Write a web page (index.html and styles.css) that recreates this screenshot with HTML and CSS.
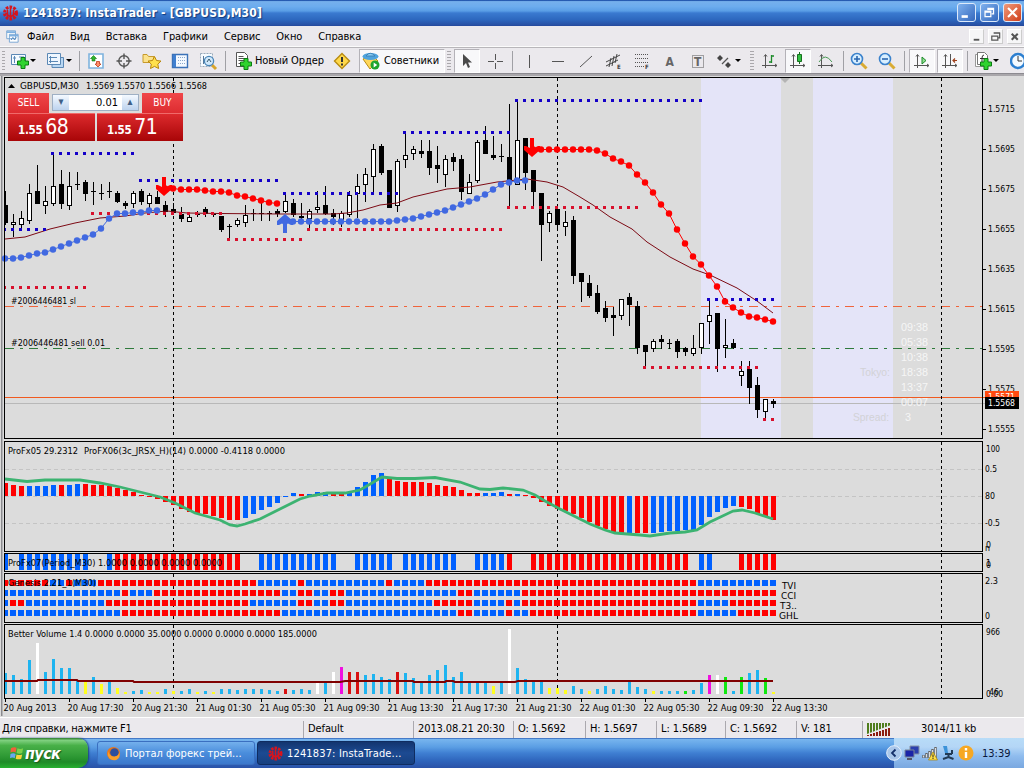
FILE: index.html
```html
<!DOCTYPE html>
<html lang="ru">
<head>
  <meta charset="UTF-8" />
  <title>1241837: InstaTrader - [GBPUSD,M30]</title>
  <link rel="stylesheet" href="styles.css">
</head>
<body>
  <svg width="0" height="0" class="defs">
    <symbol id="logo" viewBox="0 0 16 16">
      <circle cx="8" cy="8" r="6" fill="none" stroke="#d8141c" stroke-width="3" stroke-dasharray="2.6 1.2" />
      <path d="M8 2v13M5 5v7M11 5v7M3 8l5 4 5-4" fill="none" stroke="#d8141c" stroke-width="1.6" />
    </symbol>
    <symbol id="plus" viewBox="0 0 12 12">
      <path d="M4 .5h4V4h3.500v4H8v3.500H4V8H.5V4H4z" fill="#2fd32f" stroke="#0a7d12" />
    </symbol>
    <symbol id="axes" viewBox="0 0 20 20">
      <path d="M5.500 4v13M2 14.500h15M4 5.500l1.500-2 1.500 2M15 13l2 1.500-2 1.500" fill="none" stroke="#555" />
    </symbol>
  </svg>

  <div class="titlebar">
    <svg class="app-icon"><use href="#logo" /></svg>
    <span class="title">1241837: InstaTrader - [GBPUSD,M30]</span>
    <div class="win-btn"><svg viewBox="0 0 19 19"><path d="M4 14h7" stroke="#fff" stroke-width="3" /></svg></div>
    <div class="win-btn"><svg viewBox="0 0 19 19"><path d="M7 5h7v6h-2M7 6h7M4.500 8h6.500v6H4.500zM4 9h7" fill="none" stroke="#fff" stroke-width="1.400" /></svg></div>
    <div class="win-btn close"><svg viewBox="0 0 19 19"><path d="M4.500 4.500l10 10M14.500 4.500l-10 10" stroke="#fff" stroke-width="2.400" /></svg></div>
  </div>

  <div class="menubar">
    <svg class="menu-icon" viewBox="0 0 16 16"><path d="M2 1.500h10v9H2zM5 5.500h10v9H5z" fill="#fff" stroke="#6f9fcf" /><path d="M2 3h10M5 7h10" stroke="#7fb0e0" stroke-width="2" /><path d="M7 12l2-3 2 3 2-3" fill="none" stroke="#4a80b8" /></svg>
    <span>Файл</span><span>Вид</span><span>Вставка</span><span>Графики</span><span>Сервис</span><span>Окно</span><span>Справка</span>
    <div class="mdi">
      <svg viewBox="0 0 14 14"><path d="M4 10.500h6" stroke="#555" stroke-width="2" /></svg>
      <svg viewBox="0 0 14 14"><path d="M5 3.500h6.500v5H10M5 3h7M3 6.500h6.500v4.500H3zM3 6.500h7" fill="none" stroke="#555" stroke-width="1.300" /></svg>
      <svg viewBox="0 0 14 14"><path d="M4 4l6.500 6.500M10.500 4L4 10.500" stroke="#555" stroke-width="2.200" /></svg>
    </div>
  </div>

  <div class="toolbar">
    <i class="grip"></i>
    <div class="btn dd"><svg viewBox="0 0 20 20"><path d="M1.500 3.500h14v10h-14z" fill="#f4faff" stroke="#5b88b5" /><path d="M4.500 5v7M3 7h3M9 6h5" stroke="#5b88b5" /><use href="#plus" x="7" y="6" width="12" height="12" /></svg></div>
    <div class="btn dd"><svg viewBox="0 0 20 20"><path d="M6 6.500h11.500v10H6z" fill="#b9d7f3" stroke="#5b88b5" /><path d="M1.500 2.500h13v11h-13z" fill="#eef6ff" stroke="#5b88b5" /><path d="M4.500 5v7M3 10.500h9M3 6.500h8" stroke="#5b88b5" /></svg></div>
    <i class="sep narrow"></i>
    <div class="btn"><svg viewBox="0 0 20 20"><path d="M3 3h14v14H3z" fill="#fff" stroke="#7fb3de" stroke-width="1.600" /><path d="M7.500 4.500l3 3H9V10H6V7.500H4.500z" fill="#2fb52f" stroke="#117711" stroke-width=".6" /><path d="M12 16l-3-3h1.500v-2.500h3V13H15z" fill="#ff8f6a" stroke="#c03a1a" stroke-width=".8" /></svg></div>
    <div class="btn"><svg viewBox="0 0 20 20"><circle cx="10" cy="10" r="5.200" fill="none" stroke="#555" stroke-width="1.400" /><path d="M10 2.500V8M10 12v5.500M2.500 10H8M12 10h5.500" stroke="#555" stroke-width="1.400" /></svg></div>
    <div class="btn"><svg viewBox="0 0 20 20"><path d="M1 3.500h4l1.500 2H12v6H1z" fill="#fbe28c" stroke="#c79a2c" /><path d="M12.500 5.500l2 4 4.500.6-3.200 3 .8 4.400-4.100-2.100-4 2.100.8-4.400-3.300-3 4.500-.6z" fill="#ffe14d" stroke="#b8860b" /></svg></div>
    <div class="btn"><svg viewBox="0 0 20 20"><path d="M2.500 3.500h15v13h-15z" fill="#f4f9ff" stroke="#3b72b8" stroke-width="1.400" /><path d="M3 4h3v12H3z" fill="#3f7fd0" /><path d="M8 6.500h8M8 9.500h8M8 12.500h8" stroke="#8aa7cc" stroke-dasharray="1 1" /></svg></div>
    <div class="btn"><svg viewBox="0 0 20 20"><path d="M2.500 2.500h12v13h-12z" fill="#f6fbff" stroke="#9ab" stroke-dasharray="2 1" /><path d="M5.500 5v8" stroke="#579" /><path d="M14 14l4 4" stroke="#d8a52b" stroke-width="3" /><circle cx="11" cy="10" r="4.600" fill="#cfe8fb" stroke="#4a86b8" stroke-width="1.300" /><path d="M9 11l2-3 2 3" fill="none" stroke="#356" /></svg></div>
    <i class="sep"></i>
    <div class="btn wide order"><svg viewBox="0 0 20 20"><path d="M2.500 1.500h8l3 3v11h-11z" fill="#fff" stroke="#555" /><path d="M4.500 5.500h5M4.500 7.500h6M4.500 9.500h6M4.500 12.500h4" stroke="#555" /><use href="#plus" x="6" y="7" width="12" height="12" /></svg>Новый Ордер</div>
    <div class="btn"><svg viewBox="0 0 20 20"><path d="M10 2.500l7.500 7.500-7.500 7.500L2.500 10z" fill="#ffd84a" stroke="#b98c12" stroke-width="1.400" /><path d="M10 6v5M10 12.500v2" stroke="#333" stroke-width="2" /></svg></div>
    <div class="btn wide pressed experts"><svg viewBox="0 0 20 20"><path d="M2 8l7 10 8-8-3-3H4z" fill="#ffd75a" stroke="#b98c12" /><ellipse cx="9.500" cy="5.500" rx="8" ry="3.500" fill="#4fa3dd" /><path d="M5 5q4-5.500 9 0z" fill="#8fd0f5" stroke="#3b82b8" /><circle cx="14" cy="14" r="4.500" fill="#1fa52c" /><path d="M12.700 11.500v5l3.500-2.500z" fill="#fff" /></svg>Советники</div>
    <i class="grip"></i>
    <div class="btn pressed"><svg viewBox="0 0 20 20"><path d="M6 3v12l3-3 2 5 2-1-2-4.500h4z" fill="#4a4a4a" /></svg></div>
    <div class="btn"><svg viewBox="0 0 20 20"><path d="M10.500 3v6M10.500 12v6M3 10.500h6M12 10.500h6" stroke="#555" /></svg></div>
    <i class="sep"></i>
    <div class="btn"><svg viewBox="0 0 20 20"><path d="M9.500 4v13" stroke="#555" /></svg></div>
    <div class="btn"><svg viewBox="0 0 20 20"><path d="M4 10.500h12" stroke="#555" /></svg></div>
    <div class="btn"><svg viewBox="0 0 20 20"><path d="M4 16L16 5" stroke="#555" /></svg></div>
    <div class="btn"><svg viewBox="0 0 20 20"><path d="M2 11L16 4M2 15L14 9M5 16l2-9M8 15l2-10M11 12l2-9" stroke="#444" /><text x="13" y="18">E</text></svg></div>
    <div class="btn"><svg viewBox="0 0 20 20"><path d="M3 3.500h13M3 7.500h13M3 11.500h13M3 15.500h9" stroke="#555" stroke-dasharray="1 1" /><text x="13" y="18">F</text></svg></div>
    <div class="btn"><svg viewBox="0 0 20 20"><text class="letter" x="5.500" y="15">A</text></svg></div>
    <div class="btn"><svg viewBox="0 0 20 20"><path d="M4.500 4.500h11v12h-11z" fill="none" stroke="#555" stroke-dasharray="1 1" /><text class="letter" x="6" y="15">T</text></svg></div>
    <div class="btn dd"><svg viewBox="0 0 20 20"><path d="M5 4l3 3-3 3-3-3zM13 11l3 3-3 3-3-3z" fill="#444" /><path d="M7 13l6-6" stroke="#555" stroke-width="1.200" /></svg></div>
    <i class="grip"></i>
    <div class="btn"><svg viewBox="0 0 20 20"><use href="#axes" /><path d="M11.500 4v8M9 11h2.500M11.500 5H14" stroke="#1c8a2a" stroke-width="1.300" /></svg></div>
    <div class="btn pressed"><svg viewBox="0 0 20 20"><use href="#axes" /><path d="M11.500 1v12" stroke="#176f20" /><path d="M9.500 3.500h4v7h-4z" fill="#34c244" stroke="#176f20" /></svg></div>
    <div class="btn"><svg viewBox="0 0 20 20"><use href="#axes" /><path d="M3 11q6-10 13 0" fill="none" stroke="#4a9a55" /></svg></div>
    <i class="sep five"></i>
    <div class="btn"><svg viewBox="0 0 20 20"><path d="M12 12l5.500 5.500" stroke="#d9ab33" stroke-width="3" /><circle cx="8" cy="8" r="5.500" fill="#d8efff" stroke="#3b82cc" stroke-width="1.600" /><path d="M5 8h6M8 5v6" stroke="#2a66b0" stroke-width="1.600" /></svg></div>
    <div class="btn"><svg viewBox="0 0 20 20"><path d="M12 12l5.500 5.500" stroke="#d9ab33" stroke-width="3" /><circle cx="8" cy="8" r="5.500" fill="#d8efff" stroke="#3b82cc" stroke-width="1.600" /><path d="M5 8h6" stroke="#2a66b0" stroke-width="1.600" /></svg></div>
    <i class="sep"></i>
    <div class="btn pressed"><svg viewBox="0 0 20 20"><use href="#axes" /><path d="M10 6v7l4-3.500z" fill="#8fe08f" stroke="#1c8a2a" /></svg></div>
    <div class="btn pressed"><svg viewBox="0 0 20 20"><use href="#axes" /><path d="M10.500 3v11" stroke="#555" /><path d="M17 9.500h-4M15 7.500l-2 2 2 2" fill="none" stroke="#a0401a" stroke-width="1.200" /></svg></div>
    <i class="sep six"></i>
    <div class="btn dd"><svg viewBox="0 0 20 20"><path d="M2.500 3.500h9v12h-9z" fill="#fff" stroke="#999" /><path d="M4.500 1.500h7l3 3v9h-10z" fill="#fff" stroke="#777" /><path d="M11 4q-2 0-2 3v5M7 7.500h4" fill="none" stroke="#333" /><use href="#plus" x="7" y="7" width="12" height="12" /></svg></div>
    <div class="btn"><svg viewBox="0 0 20 20"><circle cx="8" cy="10" r="7" fill="#f4faff" stroke="#2c7fd0" stroke-width="2.400" /><path d="M8 5v5h4" fill="none" stroke="#333" /></svg></div>
  </div>

  <div class="chart-window">
    <svg id="chart" viewBox="0 74 1024 643" width="1024" height="643"></svg>
    <div class="one-click">
      <div class="side">SELL</div>
      <div class="lots"><b>&#9662;</b><span>0.01</span><b>&#9652;</b></div>
      <div class="side">BUY</div>
      <div class="price"><small>1.55</small>68</div>
      <div class="price buy"><small>1.55</small>71</div>
    </div>
  </div>

  <div class="statusbar">
    <div class="help">Для справки, нажмите F1</div>
    <div class="profile">Default</div>
    <div class="time">2013.08.21 20:30</div>
    <div class="open">O: 1.5692</div>
    <div class="high">H: 1.5697</div>
    <div class="low">L: 1.5689</div>
    <div class="closep">C: 1.5692</div>
    <div class="vol">V: 181</div>
    <div class="net"><svg width="24" height="13" viewBox="0 0 24 13"><path d="M0 6h24" stroke="#4f7d1e" stroke-width="12" stroke-dasharray="2 1" /><path d="M0 11l24-9v11H0z" fill="#ebe9ed" /><path d="M1 12v1M4 11V13M7 10V13M10 9V13M13 8V13M16 7V13M19 6V13M22 5v8" stroke="#8c1c10" stroke-width="2" /></svg><span>3014/11 kb</span></div>
  </div>

  <div class="taskbar">
    <div class="start">
      <svg viewBox="0 0 16 16"><path d="M1 3q3-2 6-.5L6 7.500Q3.500 6 .5 7.500z" fill="#f0603a" /><path d="M8 3q3 1.500 6 0l-1 5q-3 1.500-6 0z" fill="#7fd04a" /><path d="M.5 9q3-1.500 5.500 0l-1 4.500q-2.500-1.500-5 0z" fill="#6aa8f0" /><path d="M7 9.500q3 1.500 6 0L12 14q-3 1.500-6 0z" fill="#fbd23c" /></svg>
      <span>пуск</span>
    </div>
    <div class="task">
      <svg viewBox="0 0 16 16"><circle cx="8" cy="8" r="7" fill="#e8761c" /><circle cx="9" cy="7" r="4.600" fill="#2c4f9e" /><path d="M2 5q2 7 8 6 4-1 4-5 2 6-3 9-7 1-9-5z" fill="#f9a02c" /></svg>
      <span>Портал форекс трей...</span>
    </div>
    <div class="task active">
      <svg><use href="#logo" /></svg>
      <span>1241837: InstaTrade...</span>
    </div>
    <div class="tray">
      <svg class="chevron" viewBox="0 0 16 16"><circle cx="8" cy="8" r="7.300" fill="#a9c6ea" stroke="#e4eefb" /><path d="M9.500 4.500L6 8l3.500 3.500" fill="none" stroke="#15306a" stroke-width="1.800" /></svg>
      <svg viewBox="0 0 16 16"><path d="M6 1h9v8H6z" fill="#2b3fae" stroke="#8593a5" /><path d="M1 5h9v7H1z" fill="#1a24a8" stroke="#7b8797" /><path d="M3 14h5" stroke="#556" stroke-width="2" /></svg>
      <svg viewBox="0 0 16 16"><path d="M1.500 13v-3M4.500 13V8M7.500 13V6M10.500 13V4M13.500 13V2" stroke="#666" stroke-width="2.400" /><path d="M1.500 12.500v-2M4.500 12.500V9M7.500 12.500V7M10.500 12.500V5M13.500 12.500V3" stroke="#ddd" /><path d="M11 7l4.500 8h-9z" fill="#ffe14a" stroke="#a98300" stroke-width=".7" /><path d="M11 9.500v3M11 13v1" stroke="#222" /></svg>
      <svg viewBox="0 0 16 16"><path d="M3 1h4l1 7H5z" fill="#3c92d8" /><path d="M5 9h7M8.500 9v4M3 14l5.500-2 5 2M12 5v4" stroke="#223a55" stroke-width="2" fill="none" /></svg>
      <svg viewBox="0 0 16 16"><circle cx="8" cy="8" r="7.500" fill="#f7a823" /><path d="M8 3v2.500M8 7v6" stroke="#fff" stroke-width="2.400" /></svg>
      <span>13:39</span>
    </div>
  </div>

  <script src="chart.js"></script>
</body>
</html>
```
FILE: styles.css
```css
* {
  box-sizing: border-box;
}
body {
  margin: 0;
  width: 1024px;
  height: 768px;
  overflow: hidden;
  display: flex;
  flex-direction: column;
  background: #ebe9ed;
  color: #000;
  font-family: "DejaVu Sans Condensed", "DejaVu Sans", sans-serif;
  font-size: 11px;
  white-space: nowrap;
}
.defs {
  position: absolute;
}

/* title */
.titlebar {
  flex: none;
  height: 26px;
  display: flex;
  align-items: center;
  padding: 0 0 1px 2px;
  background: linear-gradient(#1f4fa5 0, #2a62b8 3%, #76b0ec 6%, #6cacee 25%, #5a9ee6 42%, #3a7ad0 50%, #2d68bf 75%, #2850a4 96%, #24479a);
}
.app-icon {
  width: 17px;
  height: 16px;
}
.title {
  flex: 1;
  margin-left: 4px;
  color: #fff;
  font-size: 12px;
  font-weight: bold;
  letter-spacing: 0.19px;
  text-shadow: 1px 1px 1px #123a7c;
}
.win-btn {
  width: 19px;
  height: 19px;
  margin-right: 4px;
  border: 1px solid #dce9fa;
  border-radius: 3px;
  background: linear-gradient(135deg, #7fb1ee, #3468bd);
}
.win-btn svg {
  display: block;
}
.win-btn.close {
  margin-right: 2px;
  background: linear-gradient(135deg, #f09a7a, #cf3e1a);
}

/* menu */
.menubar {
  flex: none;
  height: 21px;
  display: flex;
  align-items: center;
  padding-left: 5px;
  border-bottom: 1px solid #fbfbfb;
  letter-spacing: -0.1px;
}
.menu-icon {
  width: 14px;
  height: 15px;
  margin-right: 8px;
}
.menubar span {
  margin-right: 16px;
}
.mdi {
  display: flex;
  gap: 4px;
  margin-left: auto;
  margin-right: 2px;
}
.mdi svg {
  width: 15px;
  height: 15px;
  background: #f6f6f7;
  border: 1px solid #fff;
  border-right-color: #ccc;
  border-bottom-color: #ccc;
}

/* toolbar */
.toolbar {
  flex: none;
  height: 27px;
  display: flex;
  align-items: center;
  overflow: hidden;
  border-top: 1px solid #b8b6ba;
  border-bottom: 1px solid #8c8a90;
}
.toolbar > * {
  flex: none;
}
.grip {
  width: 8px;
  height: 20px;
  background: repeating-linear-gradient(#aaa8ac 0 1px, transparent 1px 3px) content-box;
  padding: 0 2px;
}
.toolbar > .grip:first-child {
  width: 7px;
}
.sep {
  width: 7px;
  height: 20px;
  background: linear-gradient(#a0a0a5, #a0a0a5) 3px 0 / 1px 100% no-repeat;
}
.sep.narrow {
  width: 3px;
  background-position-x: 0;
}
.sep.five {
  width: 5px;
}
.sep.six {
  width: 6px;
}
.btn {
  width: 28px;
  height: 24px;
  display: flex;
  align-items: center;
  justify-content: center;
}
.btn svg {
  width: 20px;
  height: 20px;
  flex: none;
}
.btn text {
  font-size: 6px;
  font-weight: bold;
  fill: #444;
}
.btn text.letter {
  font-size: 12px;
  fill: #666;
}
.dd {
  width: 36px;
  justify-content: flex-start;
  padding-left: 3px;
}
.dd::after {
  content: "";
  border: 3px solid transparent;
  border-top-color: #000;
  border-bottom: 0;
}
.wide {
  justify-content: flex-start;
}
.wide.order {
  width: 99px;
  padding-left: 5px;
  gap: 1px;
  letter-spacing: -0.1px;
}
.pressed {
  background: #f8f8fa;
  border: 1px solid #b4b2b8;
  border-right-color: #fff;
  border-bottom-color: #fff;
  margin: 0 1px;
  width: 26px;
}
.wide.experts {
  width: 86px;
  margin: 0 0 0 3px;
  padding-left: 1px;
  gap: 3px;
  letter-spacing: -0.1px;
}

/* chart */
.chart-window {
  position: relative;
  flex: none;
  height: 643px;
  background: #dcdcdc;
}
#chart {
  display: block;
}
#chart text {
  font-family: "DejaVu Sans Condensed", "DejaVu Sans", sans-serif;
  font-size: 9.5px;
}
#chart .session {
  font-family: "Liberation Sans", Arial, sans-serif;
  font-size: 11.5px;
}
.one-click {
  position: absolute;
  left: 8px;
  top: 19px;
  width: 175px;
  height: 48px;
  display: grid;
  grid-template-columns: 41px 93px 41px;
  grid-template-rows: 20px 28px;
}
.side {
  background: linear-gradient(#f0474a, #dd2c30);
  color: #fff;
  text-align: center;
  line-height: 20px;
  font-size: 10px;
}
.lots {
  display: flex;
  margin: 1px 3px 2px;
  border: 1px solid #9fb0c4;
  background: #fff;
}
.lots b {
  width: 16px;
  background: linear-gradient(#f4f9ff, #bdd3ee);
  color: #3f5f86;
  text-align: center;
  line-height: 14px;
}
.lots span {
  flex: 1;
  text-align: right;
  padding-right: 4px;
  line-height: 15px;
}
.price {
  grid-column: 1;
  width: 87px;
  padding-left: 10px;
  background: linear-gradient(#dc2a2d, #a80507);
  border-top: 1px solid #f06a6a;
  color: #fff;
  font-size: 21px;
  line-height: 27px;
  letter-spacing: -0.5px;
}
.price small {
  font-size: 11.5px;
  font-weight: bold;
  letter-spacing: -0.3px;
  margin-right: 3px;
}
.price.buy {
  grid-column: 2 / 4;
  grid-row: 2;
  width: 86px;
  justify-self: end;
}

/* status bar */
.statusbar {
  flex: none;
  height: 21px;
  display: flex;
  align-items: center;
  border-top: 1px solid #fff;
  padding-top: 2px;
}
.statusbar div {
  height: 17px;
  line-height: 16px;
  padding-left: 4px;
  border-left: 1px solid #aaa8ae;
  letter-spacing: -0.1px;
}
.statusbar .help {
  width: 303px;
  padding-left: 2px;
  border: 0;
  letter-spacing: -0.2px;
}
.profile {
  width: 110px;
}
.time {
  width: 100px;
}
.open {
  width: 72px;
}
.high {
  width: 71px;
}
.low {
  width: 69px;
}
.closep {
  width: 71px;
}
.vol {
  width: 66px;
}
.net {
  display: flex;
  gap: 30px;
  align-items: center;
}

/* taskbar */
.taskbar {
  flex: none;
  height: 30px;
  display: flex;
  align-items: center;
  background: linear-gradient(#2d5cb4 0, #76b4ee 5%, #5b9ee4 30%, #3f7fd2 50%, #2f66bd 75%, #2a52a8);
}
.start {
  width: 88px;
  height: 30px;
  margin-right: 9px;
  padding-left: 10px;
  display: flex;
  align-items: center;
  border-radius: 0 10px 10px 0;
  background: linear-gradient(#2c7a2c 0, #7fd07f 8%, #48b048 25%, #2f9a35 60%, #1f8a28 80%, #27b030);
  box-shadow: 1px 0 2px #1c3f7c;
}
.start svg {
  width: 15px;
  height: 16px;
}
.start span {
  color: #fff;
  font: italic bold 16px "DejaVu Sans Condensed", sans-serif;
  letter-spacing: -0.6px;
  text-shadow: 1px 1px 1px #1b5a1b;
}
.task {
  width: 158px;
  height: 24px;
  margin-right: 2px;
  padding-left: 8px;
  display: flex;
  align-items: center;
  gap: 4px;
  border: 1px solid #3a6fc0;
  border-radius: 3px;
  background: linear-gradient(#74b0ec, #4a8ddc 50%, #3b78cc);
  color: #fff;
}
.task svg {
  width: 15px;
  height: 15px;
}
.task.active {
  background: linear-gradient(#13356f, #1c4a92 50%, #17407f);
  border-color: #0f2c60;
  padding-left: 10px;
  letter-spacing: 0.15px;
}
.tray {
  width: 130px;
  height: 30px;
  margin-left: auto;
  display: flex;
  align-items: center;
  gap: 2px;
  background: linear-gradient(#b8dcf8 0, #b4d6f6 30%, #8fbcee 60%, #7aa8e0);
  color: #08163a;
}
.tray svg {
  flex: none;
  width: 16px;
  height: 16px;
}
.tray .chevron {
  margin-left: -8px;
}
.tray span {
  margin-left: 6px;
}
```
FILE: chart.js
```js
const NS = "http://www.w3.org/2000/svg";
const chart = document.getElementById("chart");
const STEP = 8;
const barX = i => 5 + i * STEP;

const BLUE = "#0060ff";
const RED = "#ff0000";

function add(tag, attrs, text) {
  const el = document.createElementNS(NS, tag);
  for (const key in attrs) el.setAttribute(key, attrs[key]);
  if (text !== undefined) el.textContent = text;
  chart.appendChild(el);
  return el;
}
function box(x, y, width, height, fill) {
  add("rect", { x, y, width, height, fill, "shape-rendering": "crispEdges" });
}
function line(x1, y1, x2, y2, stroke, dash) {
  add("line", { x1, y1, x2, y2, stroke, "stroke-dasharray": dash, "shape-rendering": "crispEdges" });
}
function poly(points, stroke, width) {
  add("polyline", { points, fill: "none", stroke, "stroke-width": width });
}
function label(x, y, text, width, fill) {
  const attrs = { x, y, fill: fill || "#000" };
  if (width) {
    attrs.textLength = width;
    attrs.lengthAdjust = "spacingAndGlyphs";
  }
  return add("text", attrs, text);
}
// "B3 R2 -1" -> ["B","B","B","R","R","-"]
function expand(runs) {
  return runs.split(" ").flatMap(r => Array(Number(r.slice(1))).fill(r[0]));
}

// window edge and session bands
box(0, 74, 1024, 2, "#a9a7ab");
box(1, 76, 1, 640, "#8a8a8e");
box(2, 76, 1, 640, "#b5b5b8");
box(701, 78, 80, 360, "#e4e4f8");
box(813, 78, 80, 360, "#e4e4f8");
add("path", { d: "M780 78h10l-5 5z", fill: "#b4b4b4" });

// order levels
line(5, 306.5, 982, 306.5, "#f0643c", "9 6 3 6");
line(5, 348.5, 982, 348.5, "#2f7a3c", "9 6 3 6");
box(5, 403, 980, 1, "#b8b8b8");
box(5, 397, 980, 1, "#f05a20");

[173.5, 557.5, 941.5].forEach(x => {
  [[78, 438], [442, 551], [554, 571], [574, 622], [625, 698]].forEach(([a, b]) => line(x, a, x, b, "#000", "3 3"));
});

// candles: high, top, bottom, low, b = bearish / w = bullish / x = doji
const candles = `191 205 223 225 b|214 222 225 237 w|211 218 225 228 w|184 193 221 224 w|165 191 204 204 b|186 201 206 214 w
154 186 204 206 w|170 184 204 209 b|172 186 206 210 w|172 184 184 190 x|180 182 194 201 b|182 191 191 205 x|184 193 193 200 x
182 191 191 198 x|191 193 202 203 b|201 203 206 209 b|191 193 204 208 w|189 191 202 205 b|193 195 204 208 w|191 197 204 204 b
201 205 212 217 b|203 209 213 214 b|207 214 219 222 b|214 217 222 222 w|211 214 214 217 x|207 209 214 217 b|212 214 214 217 x
216 216 230 232 b|224 226 226 239 x|218 220 225 227 w|205 215 223 227 w|209 213 213 221 x|203 213 213 221 x|211 213 213 221 x
209 211 214 217 b|195 201 212 213 w|199 203 215 217 b|203 216 218 220 b|209 211 219 228 w|191 207 210 213 w|186 205 214 215 b
209 213 217 225 b|211 213 220 227 w|191 195 215 217 w|174 186 194 218 w|168 174 185 202 w|144 149 177 195 w|144 146 173 175 b
170 170 208 208 b|159 161 206 212 w|133 155 160 168 w|146 149 154 160 w|140 151 154 158 b|140 151 168 175 b|146 165 169 183 b
155 159 175 187 w|153 157 162 171 b|155 159 192 200 b|174 182 194 194 w|140 142 181 183 w|126 140 154 154 b|136 155 158 160 b
144 156 156 162 x|104 157 180 207 b|102 140 185 185 w|138 138 173 190 b|170 170 192 207 b|193 193 225 261 b|211 213 223 232 w
205 209 225 228 b|211 222 227 236 w|216 220 276 284 b|273 273 282 302 b|275 283 296 298 b|285 293 312 314 b|301 308 318 322 b
307 315 318 336 b|299 299 316 320 w|293 297 305 326 b|301 306 348 354 b|345 345 352 368 b|339 341 349 352 w|335 339 342 349 b
339 343 343 349 x|339 341 352 358 b|347 348 352 356 b|335 348 354 356 w|323 323 348 354 w|300 315 322 344 w|313 313 349 372 b
319 345 348 358 w|339 343 348 349 b|361 371 376 386 w|361 369 388 404 b|377 385 410 418 b|399 399 412 418 w|399 401 404 408 b`;
candles.split(/[|\n]/).forEach((c, i) => {
  const [high, top, bottom, low, kind] = c.split(" ");
  const x = barX(i);
  const left = Math.max(x - 2, 5);
  box(x, high, 1, low - high, "#000");
  if (kind === "x") {
    box(x - 2, top, 5, 1, "#000");
  } else {
    box(left, top, x + 3 - left, bottom - top, "#000");
    if (kind === "w") box(x - 1, +top + 1, 3, bottom - top - 2, "#fff");
  }
});

// moving average
poly("5,239 25,237 50,229 75,223 100,218 125,216 145,213 167,211 187,213 220,213.5 280,214 333,214 347,213 363,210 380,205 397,203 413,197 447,189 470,187 497,182 527,179 547,182 563,187 580,197 593,205 610,217 632,229 647,242 670,257 693,269 710,275 737,288 757,301 773,313", "#7d0a14", 1);

// fractal levels
const levels = [
  [5, 45, 228, "b"], [53, 133, 152, "b"], [141, 277, 179, "b"], [285, 397, 192, "b"], [405, 509, 131, "b"], [517, 701, 99, "b"], [709, 773, 298, "b"],
  [5, 85, 286, "r"], [93, 221, 212, "r"], [229, 301, 238, "r"], [309, 501, 228, "r"], [509, 637, 206, "r"], [645, 757, 366, "r"], [765, 773, 418, "r"]
];
levels.forEach(([from, to, y, c]) => {
  for (let x = from; x <= to; x += STEP) box(Math.max(x - 2, 5), y, x === 5 ? 1 : 3, 3, c === "b" ? "#1400c8" : "#d8102c");
});

// trend dots
function trend(start, ys, color) {
  poly(ys.map((y, i) => barX(start + i) + "," + (y + 0.5)).join(" "), color, 1);
  ys.forEach((y, i) => add("circle", { cx: barX(start + i), cy: y + 0.5, r: 3.2, fill: color }));
}
trend(0, [258, 258, 257, 255, 253, 252, 249, 246, 243, 240, 237, 234, 228, 218, 213, 213, 212, 212, 210, 210], "#4169e1");
trend(20, [188, 188, 189, 189, 189, 190, 191, 191, 192, 195, 196, 198, 200, 202, 203], RED);
trend(35, [221, 221, 221, 221, 221, 221, 221, 221, 221, 221, 221, 221, 221, 221, 220, 219, 218, 216, 214, 212, 210, 207, 204, 201, 198, 194, 189, 184, 182, 180, 180], "#4169e1");
trend(66, [149, 149, 149, 149, 149, 149, 149, 149, 150, 153, 158, 161, 165, 174, 182, 192, 204, 213, 229, 243, 256, 264, 275, 286, 301, 307, 312, 316, 317, 319, 321], RED);

function arrow(x, y, dir, color) {
  add("path", { d: "M0 9l8-7v-4h-2l-4 2V-10h-4V0l-4-2h-2v4z", fill: color, transform: `translate(${x} ${y}) scale(1 ${dir})` });
}
arrow(164, 187, 1, RED);
arrow(532, 148, 1, RED);
arrow(285, 223, -1, "#4169e1");

// oscillator
[469.5, 496.5, 523.5].forEach(y => line(5, y, 982, y, "#c4c4c4", "4 3"));
const osc = [13, 11, 10, 10, 10, 10, 11, 11, 11, 12, 12, 11, 11, 10, 8, 6, 4, 1, -1, -3, -6, -9, -13, -16, -17, -18, -20, -22, -24, -24, -22, -18, -14, -11, -7, -1, 3, 2, 2, 4, 4, 3, 2, 4, 9, 14, 21, 23, 18, 15, 14, 14, 14, 13, 11, 10, 9, 6, 3, 3, 3, 3, 4, 2, 2, 1, -2, -6, -10, -13, -15, -18, -22, -26, -30, -33, -36, -37, -37, -37, -37, -37, -36, -35, -35, -34, -34, -29, -21, -16, -12, -10, -11, -13, -18, -21, -24];
const oscColor = expand("R3 B4 R1 B2 R20 B7 R1 B3 R2 B5 R12 B3 R1 B1 R13 B1 R2 B11 R5");
osc.forEach((v, i) => {
  const left = Math.max(barX(i) - 2, 5);
  box(left, v > 0 ? 496 - v : 496, barX(i) + 3 - left, Math.abs(v), oscColor[i] === "B" ? BLUE : RED);
});
poly("5,479 27,481.500 45,480 80,480 100,483 120,487 140,492 160,497 175,503 195,513 220,520 230,525 237,526 245,524 260,519 280,509 300,499 310,496 327,493 345,493 360,490 372,483 382,477 397,478.500 415,478.500 435,477.500 460,482 480,489 490,489.500 503,488 523,490 535,495 545,501 560,509 590,524 605,530 615,533 640,535 650,536 670,533 685,532 697,530 710,522 733,511 742,510 755,513 773,519", "#3cb371", 2.8);

// period strip
expand("B1 -1 B9 -2 B1 R16 -2 B10 -2 B5 -1 B7 -2 B4 R1 -2 R20 -1 B2 -3 R5").forEach((c, i) => {
  const left = Math.max(barX(i) - 2, 5);
  if (c !== "-") box(left, 554, barX(i) + 3 - left, 16, c === "B" ? BLUE : RED);
});

// genesis matrix
[
  "R6 B2 R1 B3 R20 B5 R1 B10 R1 B4 R34 B10",
  "B15 R1 B3 R16 B2 R2 B2 R2 B14 R2 B6 R32",
  "B1 R2 B10 R18 B6 R2 B2 R2 B11 R5 B4 R1 B1 R22 B4 R6",
  "B15 R20 B22 R2 B4 R1 B2 R21 B5 R5"
].forEach((row, r) => expand(row).forEach((c, i) => {
  const left = Math.max(barX(i) - 3, 5);
  box(left, 580 + r * 10, barX(i) + 3 - left, 6, c === "B" ? BLUE : RED);
}));

// volume
const volColor = { c: "#1eb4f0", w: "#fff", y: "#ffff20", r: "#d81010", m: "#f010e0", g: "#10e810" };
const volume = "c21 c19 c15 c34 w51 c22 c35 c26 c26 c14 y12 c17 y10 c12 y6 y2 c3 c4 y2 y2 c5 y3 c3 c5 y2 c3 y2 c5 c5 c4 c5 c5 c5 c4 c3 r5 c4 c5 c4 w13 c12 w22 m27 r22 r22 c19 c20 c17 c15 r22 c21 c16 c12 c19 c24 c29 c17 c22 c11 c11 c12 y8 c11 w65 c26 c15 c12 c12 y6 y6 y4 c8 c5 y3 c5 c8 c5 c4 c12 c7 c5 y3 c3 c3 c3 g3 c4 c11 m19 w19 g17 c3 g17 c21 c24 g16 y2";
volume.split(" ").forEach((v, i) => {
  const h = Number(v.slice(1));
  box(i ? barX(i) - 1 : 5, 694 - h, i ? 3 : 2, h, volColor[v[0]]);
});
poly("5,681 37,681 38,680 77,680 78,681 133,681 134,682 340,682 345,681 413,681 414,682 445,682 446,681 453,681 455,682 515,682 518,681 773,681", "#800000", 2);

// panel frames
[[77, 438], [441, 551], [553, 571], [573, 622], [624, 698]].forEach(([top, bottom]) => {
  add("rect", { x: 4.5, y: top + 0.5, width: 978, height: bottom - top, fill: "none", stroke: "#000" });
});

// texts
add("path", { d: "M8 88h7l-3.500-4z" });
label(20, 89, "GBPUSD,M30", 59);
label(86, 89, "1.5569 1.5570 1.5566 1.5568", 121);
label(11, 304, "#2006446481 sl", 65);
label(11, 346, "#2006446481 sell 0.01", 94);
label(8, 454, "ProFx05 29.2312", 70);
label(84, 454, "ProFX06(3c_JRSX_H)(14) 0.0000 -0.4118 0.0000", 201);
label(8, 566, "ProFx07(Period_M30) 1.0000 0.0000 0.0000 0.0000", 214);
label(8, 586, "Genesis 2.21_1(M30)", 88);
label(8, 637, "Better Volume 1.4 0.0000 0.0000 35.0000 0.0000 0.0000 0.0000 185.0000", 309);
label(782, 589, "TVI", 14);
label(781, 599, "CCI", 15);
label(780, 609, "T3..", 17);
label(779, 619, "GHL", 19);

[["09:38", 331], ["05:38", 346], ["10:38", 361], ["18:38", 376], ["13:37", 391], ["00:07", 406]].forEach(([t, y]) => {
  label(901, y, t, 27, "#f6f6f6").setAttribute("class", "session");
});
label(905, 421, "3", 6, "#f6f6f6").setAttribute("class", "session");
label(860, 376, "Tokyo:", 30, "#d2d2d6").setAttribute("class", "session");
label(853, 421, "Spread:", 36, "#d2d2d6").setAttribute("class", "session");

// price scale
["1.5715", "1.5695", "1.5675", "1.5655", "1.5635", "1.5615", "1.5595", "1.5575", "1.5555"].forEach((p, i) => {
  box(983, 109 + i * 40, 3, 1, "#000");
  label(988, 112 + i * 40, p, 27);
});
box(985, 391, 34, 8, "#ff4a10");
label(988, 400, "1.5571", 27, "#fff");
box(985, 397, 34, 12, "#000");
label(988, 406, "1.5568", 27, "#fff");
label(986, 452, "100", 14);
label(985, 472, "0.5", 12);
label(985, 499, "80", 10);
label(985, 526, "-0.5", 15);
label(986, 548, "0", 5);
label(985, 551, "n", 5);
label(986, 566, "1", 5);
label(986, 568, "0", 5);
label(985, 584, "2.3", 13);
label(985, 619, "0", 5);
label(986, 635, "966", 14);
label(986, 697, "0.00", 17);
label(989, 695, "46", 10);

// time scale
["20 Aug 2013", "20 Aug 17:30", "20 Aug 21:30", "21 Aug 01:30", "21 Aug 05:30", "21 Aug 09:30", "21 Aug 13:30", "21 Aug 17:30", "21 Aug 21:30", "22 Aug 01:30", "22 Aug 05:30", "22 Aug 09:30", "22 Aug 13:30"].forEach((t, i) => {
  box(5 + i * 64, 699, 1, 3, "#000");
  label(3.5 + i * 64, 711, t, i ? 56 : 53);
});
```
